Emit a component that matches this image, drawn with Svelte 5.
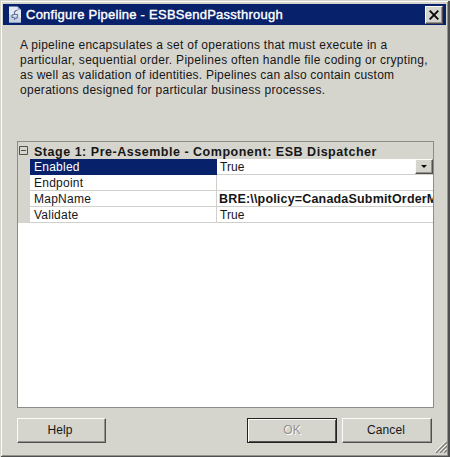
<script>
  const lines = [
    { text: 'A pipeline encapsulates a set of operations that must execute in a', cls: 'l1' },
    { text: 'particular, sequential order. Pipelines often handle file coding or crypting,', cls: 'l2' },
    { text: 'as well as validation of identities. Pipelines can also contain custom', cls: 'l3' },
    { text: 'operations designed for particular business processes.', cls: 'l4' }
  ];
  const rows = [
    { name: 'Enabled', value: 'True', selected: true },
    { name: 'Endpoint', value: '' },
    { name: 'MapName', value: 'BRE:\\\\policy=CanadaSubmitOrderM', bold: true },
    { name: 'Validate', value: 'True' }
  ];
</script>

<div class="window">
  <header>
    <svg class="doc" width="14" height="17" viewBox="0 0 14 17">
      <path d="M1 .5h8.500l3.500 3.500v12.500H1z" fill="#e3e9f3" />
      <path d="M1 8v8.500h12V12z" fill="#b9c6dd" opacity=".7" />
      <path d="M9.500.5V4H13z" fill="#9baed0" />
      <path d="M9.500 4.500H8L6.500 6v2.500h3V11L8 12.500H6.500V14M9.500 8.500H5L4 9.500v2h2.500" fill="none" stroke="#65799b" stroke-width="1.200" />
    </svg>
    <h1>Configure Pipeline - ESBSendPassthrough</h1>
    <button class="close" aria-label="Close">
      <svg width="10" height="10" viewBox="0 0 10 10"><path d="M.7.7l8.600 8.600M9.300.7L.7 9.300" stroke="#080808" stroke-width="1.900" /></svg>
    </button>
  </header>

  <p class="intro">
    {#each lines as line}<span class={line.cls}>{line.text}</span>{/each}
  </p>

  <section class="grid">
    <div class="category">
      <span class="toggle"><svg width="9" height="9" viewBox="0 0 9 9"><path d="M.5.5h8v8h-8zM2 4.500h5" fill="none" stroke="#505050" /></svg></span>
      <b>Stage 1: Pre-Assemble - Component: ESB Dispatcher</b>
    </div>
    {#each rows as row}
      <div class="row" class:selected={row.selected}>
        <div class="gutter"></div>
        <div class="name">{row.name}</div>
        <div class="value" class:bold={row.bold}>
          <span>{row.value}</span>
          {#if row.selected}
            <button class="drop" aria-label="Open list"><svg width="6" height="3" viewBox="0 0 6 3"><path d="M0 0h6L3 3z" fill="#080808" /></svg></button>
          {/if}
        </div>
      </div>
    {/each}
  </section>

  <footer>
    <button class="push help">Help</button>
    <button class="push ok" disabled>OK</button>
    <button class="push cancel">Cancel</button>
  </footer>
  <svg class="grip" width="12" height="12" viewBox="0 0 12 12">
    <path d="M0 11L11 0M4 11l7-7M8 11l3-3" stroke="#f8f8f5" stroke-width="1" />
    <path d="M1 12L12 1M5 12l7-7M9 12l3-3" stroke="#7b7b77" stroke-width="1.400" />
  </svg>
</div>

<style>
  :global(body) { margin: 0; overflow: hidden; background: #d5d5ce; }
  * { box-sizing: border-box; }
  .window {
    position: relative;
    width: 450px;
    height: 457px;
    padding: 4px 4px 0 3px;
    display: flex;
    flex-direction: column;
    background: #d5d5ce;
    font: 12px/15px "Liberation Sans", Arial, sans-serif;
    color: #161616;
    box-shadow: inset 1px 1px #d5d5ce, inset -2px -1px #505050, inset 2px 2px #fbfbf8, inset -3px -2px #92928e;
  }
  header {
    height: 21px;
    flex: none;
    display: flex;
    align-items: center;
    padding: 0 3px 0 5px;
    background: #08216b;
    color: #fff;
  }
  h1 { margin: 0 auto 0 4px; font-size: 13px; font-weight: normal; line-height: 17px; white-space: nowrap; letter-spacing: .25px; -webkit-text-stroke: .4px #fff; }
  button {
    padding: 0;
    display: flex;
    align-items: center;
    justify-content: center;
    font: inherit;
    color: inherit;
    background: #d5d5ce;
    border: 1px solid;
    border-color: #fbfbf8 #505050 #505050 #fbfbf8;
    border-radius: 0;
    box-shadow: inset -1px -1px #92928e;
  }
  .close { width: 18px; height: 18px; }
  .intro { height: 103px; flex: none; margin: 13px 0 0 17px; white-space: nowrap; }
  .intro span { display: block; width: max-content; }
  .l1 { letter-spacing: .28px; }
  .l2 { letter-spacing: .29px; }
  .l3 { letter-spacing: .23px; }
  .l4 { letter-spacing: .28px; }
  .grid {
    width: 417px;
    height: 267px;
    flex: none;
    margin-left: 14px;
    border: 1px solid #8c8c88;
    background: #fff;
    overflow: hidden;
  }
  .category { height: 17px; display: flex; background: #d5d5ce; }
  .toggle { width: 12px; padding: 4px 0 0 1px; line-height: 0; }
  .category b { margin-left: 4px; font-size: 12.5px; line-height: 20px; white-space: nowrap; letter-spacing: .52px; }
  .row { height: 16px; display: flex; line-height: 17px; }
  .gutter { width: 12px; background: #d5d5ce; }
  .name { width: 187px; padding-left: 4px; border-right: 1px solid #d0d0ca; border-bottom: 1px solid #d0d0ca; letter-spacing: .25px; }
  .value { width: 216px; padding-left: 3px; display: flex; justify-content: space-between; overflow: hidden; white-space: nowrap; border-bottom: 1px solid #d0d0ca; line-height: 16px; letter-spacing: .1px; }
  .bold { padding-left: 2px; font-weight: bold; font-size: 12.5px; letter-spacing: .18px; }
  .selected .name { background: #08216b; color: #fff; border-color: #08216b; }
  .drop { width: 18px; height: 15px; flex: none; }
  footer { display: flex; margin: 10px 0 0 14px; }
  .push { width: 89px; height: 25px; letter-spacing: .1px; }
  .help { padding-right: 3px; }
  .ok { width: 90px; margin: 0 5px 0 141px; color: #92928e; text-shadow: 1px 1px #fff; border-color: #222; box-shadow: inset 1px 1px #fbfbf8, inset -1px -1px #505050; }
  .cancel { width: 90px; padding-right: 2px; }
  .grip { position: absolute; right: 3px; bottom: 4px; }
</style>
